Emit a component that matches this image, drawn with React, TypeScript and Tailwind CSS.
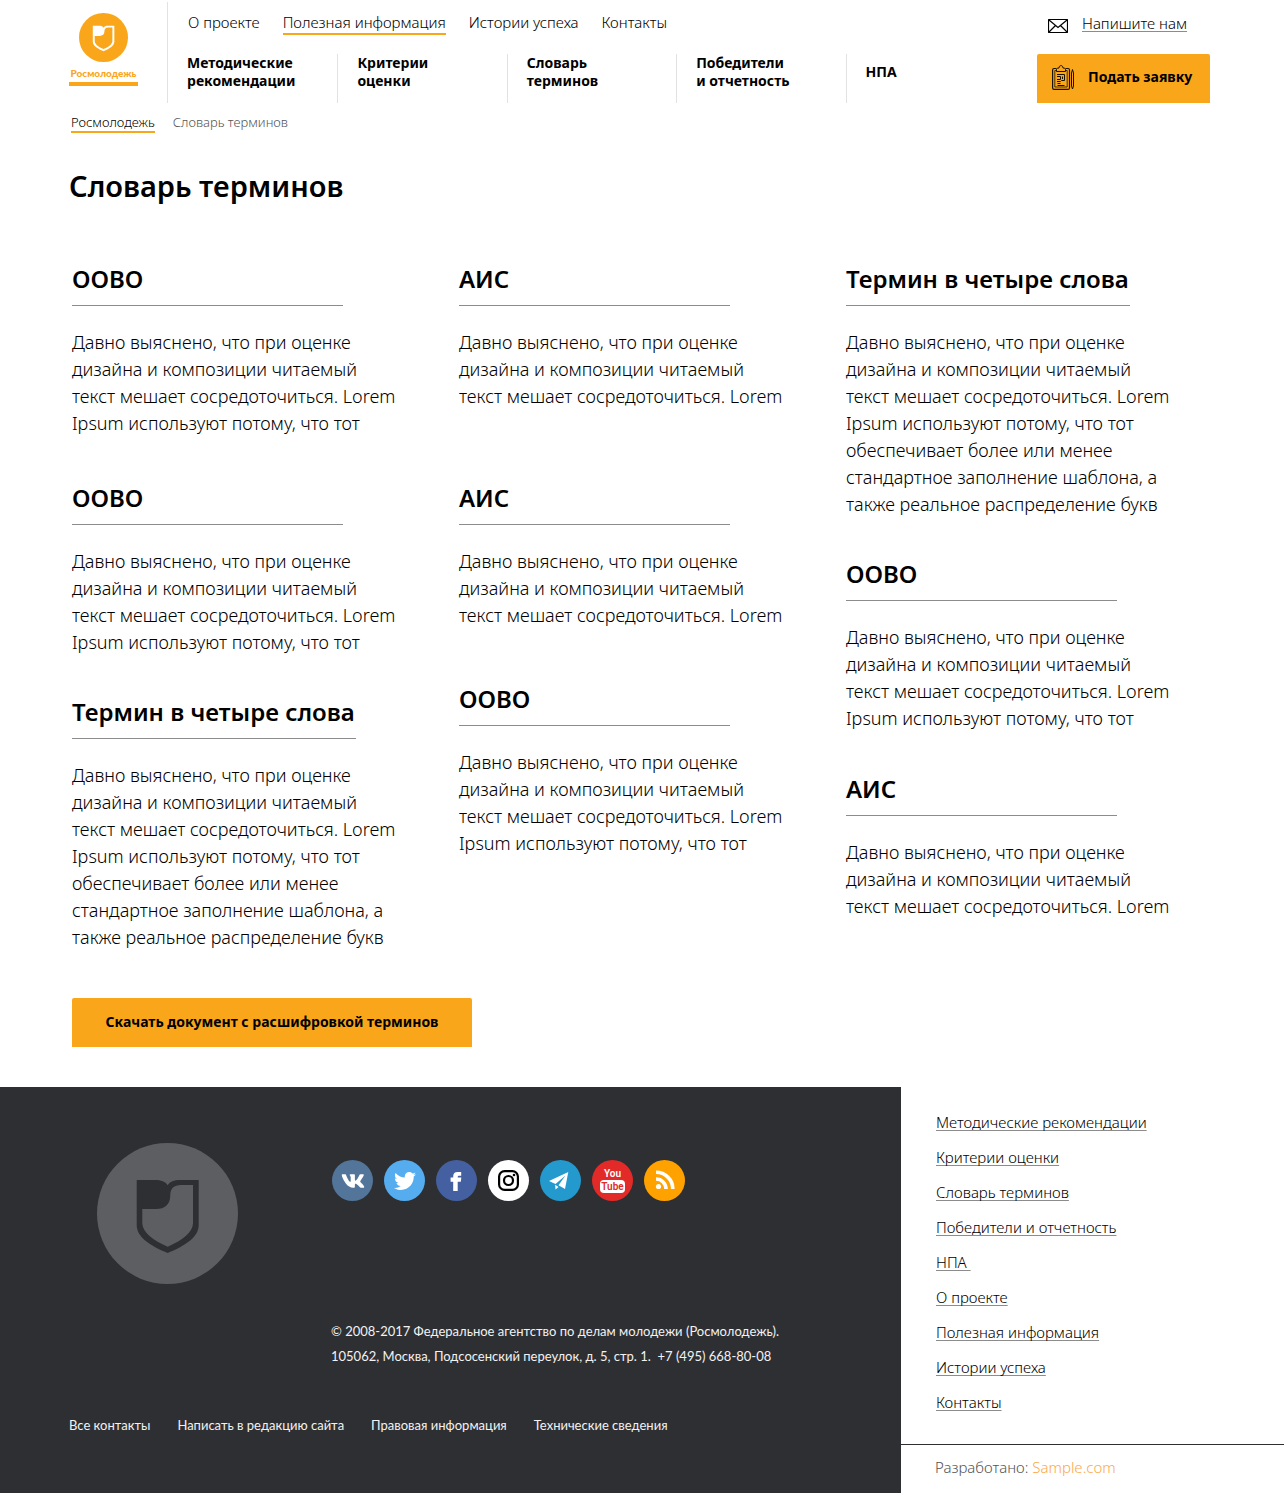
import React from 'react';
import { FaTwitter, FaVk } from 'react-icons/fa';

const topLinks = ['О проекте', 'Полезная информация', 'Истории успеха', 'Контакты'];

const sections = [
  ['Методические', 'рекомендации'],
  ['Критерии', 'оценки'],
  ['Словарь', 'терминов'],
  ['Победители', 'и отчетность'],
  ['НПА'],
];

const body = [
  'Давно выяснено, что при оценке',
  'дизайна и композиции читаемый',
  'текст мешает сосредоточиться. Lorem',
  'Ipsum используют потому, что тот',
  'обеспечивает более или менее',
  'стандартное заполнение шаблона, а',
  'также реальное распределение букв',
];

type Term = { title: string; lines: number; gap: string; rule: string };

const shortRule = 'w-[271px]';
const longRule = 'w-[284px]';

const columns: Term[][] = [
  [
    { title: 'ООВО', lines: 4, gap: '', rule: shortRule },
    { title: 'ООВО', lines: 4, gap: 'mt-[45px]', rule: shortRule },
    { title: 'Термин в четыре слова', lines: 7, gap: 'mt-10', rule: longRule },
  ],
  [
    { title: 'АИС', lines: 3, gap: '', rule: shortRule },
    { title: 'АИС', lines: 3, gap: 'mt-18', rule: shortRule },
    { title: 'ООВО', lines: 4, gap: 'mt-[54px]', rule: shortRule },
  ],
  [
    { title: 'Термин в четыре слова', lines: 7, gap: '', rule: longRule },
    { title: 'ООВО', lines: 4, gap: 'mt-10', rule: shortRule },
    { title: 'АИС', lines: 3, gap: 'mt-[41px]', rule: shortRule },
  ],
];

const footerLinks = [
  'Методические рекомендации',
  'Критерии оценки',
  'Словарь терминов',
  'Победители и отчетность',
  'НПА\u00a0',
  'О проекте',
  'Полезная информация',
  'Истории успеха',
  'Контакты',
];

const legalLinks = [
  'Все контакты',
  'Написать в редакцию сайта',
  'Правовая информация',
  'Технические сведения',
];

function Emblem({ className, disc, shield }: { className: string; disc: string; shield: string }) {
  return (
    <svg viewBox="0 0 141 141" className={className} aria-hidden="true">
      <circle cx="70.5" cy="70.5" r="70.5" fill={disc} />
      <path
        fill={shield}
        fillRule="evenodd"
        d="M39.700 37H58c6 0 10.500 1.500 12.700 5.300C73 38.500 77 37 83 37h18.700v45c0 12-13 20.500-31 28-18-7.500-31-16-31-28Zm5.600 29v14.300c0 9 11 17.200 25.400 23.400C85 97.500 96 89.300 96 80.300V42H84c-7 0-10.700 3.500-10.700 10 0 9.500-5.300 14-14.300 14Z"
      />
    </svg>
  );
}

function MailIcon() {
  return (
    <svg viewBox="0 0 20 14" className="h-3.5 w-5" fill="none" stroke="#000" aria-hidden="true">
      <rect x="0.5" y="0.5" width="19" height="13" rx="0.5" strokeWidth="1.200" />
      <path d="M1 1l9 7.500L19 1M1 13l6.500-6.500M19 13l-6.500-6.500" strokeWidth="1.200" />
    </svg>
  );
}

function ClipboardIcon() {
  return (
    <svg viewBox="0 0 22 25" className="h-[25px] w-[22px]" fill="none" stroke="#1a1200" aria-hidden="true">
      <path d="M4.500 3.500H2A1.500 1.500 0 0 0 .6 5v18A1.500 1.500 0 0 0 2 24.400h14a1.500 1.500 0 0 0 1.500-1.400V5A1.500 1.500 0 0 0 16 3.500h-2.500" strokeWidth="1.200" />
      <path d="M4.500 6.500V4.500c0-1 1-1.500 2.500-1.500C7 1.500 7.800.6 9 .6s2 .9 2 2.400c1.500 0 2.500.5 2.500 1.500v2Z" />
      <path d="M4.500 5.500H2.800V22h12.400V5.500h-1.700" strokeWidth="0.800" />
      <path d="M5 9.500h7.500v6H9.500l-1 1H5M5 11.500h3.500v3H5M5.500 18.500h3M5.500 20.500h7M10.500 11.500v2.500" />
      <path d="M19.500 8l1-3.500 1 3.500v13l-1 3-1-3Z" strokeWidth="1" />
    </svg>
  );
}

const socials: { name: string; bg: string; icon: React.ReactNode }[] = [
  { name: 'ВКонтакте', bg: 'bg-[#527599]', icon: <FaVk className="size-6" /> },
  { name: 'Twitter', bg: 'bg-[#55acee]', icon: <FaTwitter className="size-[22px]" /> },
  {
    name: 'Facebook',
    bg: 'bg-[#4560a0]',
    icon: (
      <svg viewBox="0 0 41 41" className="size-full" fill="currentColor">
        <path d="M17.200 31v-9.300h-2.600v-4.200h2.600v-1.200c0-2.900 1.600-4.300 4.300-4.300h3.700v3.700h-2c-1 0-1.500.4-1.500 1.300v.5h3.600l-.5 4.200h-3.100V31Z" />
      </svg>
    ),
  },
  {
    name: 'Instagram',
    bg: 'bg-white',
    icon: (
      <svg viewBox="0 0 41 41" className="size-full" fill="none" stroke="#000" strokeWidth="2.200">
        <rect x="11.100" y="11.100" width="18.800" height="18.800" rx="5.500" />
        <circle cx="20.500" cy="20.500" r="4.500" />
        <circle cx="26" cy="15" r="1.300" fill="#000" stroke="none" />
      </svg>
    ),
  },
  {
    name: 'Telegram',
    bg: 'bg-[#2499cd]',
    icon: (
      <svg viewBox="0 0 41 41" className="size-full" fill="currentColor">
        <path d="M28.300 12 25 29l-6.500-3.800L25.500 15.500 15.500 24 9 21Z" />
        <path d="M15.200 24.800 15.500 29.500l3-2.600Z" />
      </svg>
    ),
  },
  {
    name: 'YouTube',
    bg: 'bg-[#e22b28]',
    icon: (
      <span className="flex flex-col items-center font-['Roboto',sans-serif] text-[10px] font-semibold">
        <span className="leading-3">You</span>
        <span className="rounded-sm bg-white px-px leading-[13px] text-[#e22b28]">Tube</span>
      </span>
    ),
  },
  {
    name: 'RSS',
    bg: 'bg-[#ffa200]',
    icon: (
      <svg viewBox="0 0 41 41" className="size-full" fill="none" stroke="#fff" strokeWidth="3.600">
        <path d="M12 12.200A16.800 16.800 0 0 1 28.800 29M12 19a10 10 0 0 1 10 10" />
        <circle cx="14.500" cy="26.500" r="2.600" fill="#fff" stroke="none" />
      </svg>
    ),
  },
];

const underlined =
  'underline decoration-[#8c8c8c] decoration-1 underline-offset-2 [text-decoration-skip-ink:none]';

export default function App() {
  return (
    <div className="bg-white font-['Noto_Sans',sans-serif] text-black">
      <header className="flex items-start">
        <a href="#" className="mt-[13px] ml-[69px] flex w-[69px] flex-col items-center text-[#faa61a]">
          <Emblem className="size-[49px]" disc="#faa61a" shield="#ffffff" />
          <span className="mt-1 w-full border-b-4 border-[#faa61a] pb-0.5 text-center font-['Lato',sans-serif] text-[10px] leading-[14px] font-black">
            Росмолодежь
          </span>
        </a>

        <div className="mt-0.5 ml-[29px] flex-1 border-l border-[#e2e2e2] pt-2.5">
          <nav className="flex gap-[23px] pl-5 text-[15px] leading-5 font-light whitespace-nowrap">
            {topLinks.map((label) => (
              <a
                key={label}
                href="#"
                className={
                  label === 'Полезная информация'
                    ? 'border-b-2 border-[#faa61a] pb-px'
                    : 'border-b-2 border-transparent pb-px'
                }
              >
                {label}
              </a>
            ))}
          </nav>
          <nav className="mt-[19px] grid grid-cols-5 text-sm leading-[18px] font-bold">
            {sections.map((lines, i) => (
              <a
                key={lines[0]}
                href="#"
                className={
                  i === 0
                    ? 'flex min-h-[49px] flex-col justify-center pb-[13px] pl-[19px] whitespace-nowrap'
                    : 'flex min-h-[49px] flex-col justify-center border-l border-[#e2e2e2] pb-[13px] pl-[19px] whitespace-nowrap'
                }
              >
                {lines.map((line) => (
                  <span key={line}>{line}</span>
                ))}
              </a>
            ))}
          </nav>
        </div>

        <div className="mt-[13px] mr-[74px] ml-[22px] w-[173px]">
          <a href="#" className="flex h-5 items-center gap-3.5 pl-[11px] text-[15px] leading-5 font-light whitespace-nowrap">
            <span className="pt-1.5">
              <MailIcon />
            </span>
            <span className={underlined}>Напишите нам</span>
          </a>
          <button
            type="button"
            className="mt-[21px] flex h-[49px] w-full items-center gap-3.5 rounded-t-xs bg-[#faa61a] pb-[3px] pl-[15px] text-sm font-bold whitespace-nowrap"
          >
            <ClipboardIcon />
            Подать заявку
          </button>
        </div>
      </header>

      <nav className="mt-2.5 flex gap-[18px] pl-[71px] text-[13px] leading-[18px] font-light" aria-label="Навигация">
        <a href="#" className="border-b-2 border-[#faa61a]">
          Росмолодежь
        </a>
        <span className="text-[#555]">Словарь терминов</span>
      </nav>

      <main className="pb-10">
        <h1 className="mt-[33px] pl-[69px] text-[29px] leading-10 font-semibold">Словарь терминов</h1>

        <div className="mt-[57px] grid grid-cols-3 pr-[51px] pl-18">
          {columns.map((terms, c) => (
            <div key={c}>
              {terms.map((term, i) => (
                <section key={i} className={term.gap}>
                  <h2 className="text-2xl leading-8 font-semibold whitespace-nowrap">{term.title}</h2>
                  <hr className={`mt-2.5 border-[#8c8c8c] ${term.rule}`} />
                  <p className="mt-[23px] text-lg leading-[27px] font-light whitespace-pre">
                    {body.slice(0, term.lines).join('\n')}
                  </p>
                </section>
              ))}
            </div>
          ))}
        </div>

        <button
          type="button"
          className="mt-[47px] ml-18 block h-[49px] w-[400px] rounded-t-xs bg-[#faa61a] pb-0.5 text-sm font-bold"
        >
          Скачать документ с расшифровкой терминов
        </button>
      </main>

      <footer className="flex">
        <div className="flex-1 bg-[#2e2f33] pt-14 pl-[69px] font-['Lato',sans-serif] text-[13px] text-[#f2f2f2]">
          <div className="flex gap-[93px] pl-7">
            <Emblem className="size-[141px]" disc="#5d5e61" shield="#2e2f33" />
            <div className="pt-[17px]">
              <div className="flex gap-[11px] pl-px">
                {socials.map((s) => (
                  <a
                    key={s.name}
                    href="#"
                    aria-label={s.name}
                    className={`flex size-[41px] items-center justify-center rounded-full text-white ${s.bg}`}
                  >
                    {s.icon}
                  </a>
                ))}
              </div>
              <p className="mt-[118px] leading-[25px] whitespace-pre">
                {'© 2008-2017 Федеральное агентство по делам молодежи (Росмолодежь).\n105062, Москва, Подсосенский переулок, д. 5, стр. 1.  +7 (495) 668-80-08'}
              </p>
            </div>
          </div>
          <nav className="mt-[46px] flex gap-[27px] leading-5 whitespace-nowrap">
            {legalLinks.map((label) => (
              <a key={label} href="#">
                {label}
              </a>
            ))}
          </nav>
        </div>

        <div className="w-[383px]">
          <ul className="pt-[18px] pb-6 pl-[35px] text-[15px] leading-[35px] font-light">
            {footerLinks.map((label) => (
              <li key={label}>
                <a href="#" className={underlined}>
                  {label}
                </a>
              </li>
            ))}
          </ul>
          <p className="border-t border-[#2e2f33] pb-[3px] pl-[34px] text-[15px] leading-[45px] font-light text-[#555]">
            Разработано:{' '}
            <a href="#" className="text-[#fba94c]">
              Sample.com
            </a>
          </p>
        </div>
      </footer>
    </div>
  );
}
